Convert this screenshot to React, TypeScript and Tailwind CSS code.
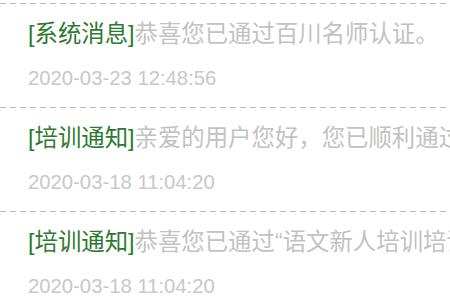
import React from "react";

const messages = [
  {
    tag: "[系统消息]",
    text: "恭喜您已通过百川名师认证。",
    time: "2020-03-23 12:48:56",
  },
  {
    tag: "[培训通知]",
    text: "亲爱的用户您好，您已顺利通过本次培训考核。",
    time: "2020-03-18 11:04:20",
  },
  {
    tag: "[培训通知]",
    text: "恭喜您已通过“语文新人培训培训班”考核。",
    time: "2020-03-18 11:04:20",
  },
];

const Divider = () => (
  <div className="h-px w-full bg-[repeating-linear-gradient(to_right,#b8b8b8_0px,#b8b8b8_6px,transparent_6px,transparent_10px)]" />
);

const App = () => {
  return (
    <div
      className="w-[450px] h-[300px] overflow-hidden bg-white pt-[3px]"
      style={{ fontFamily: '"Liberation Sans", "Noto Sans CJK SC", sans-serif' }}
    >
      {messages.map((m, i) => (
        <div key={i} className="h-[104px]">
          <Divider />
          <div className="pl-[28px] pt-[14px] text-[23.4px] leading-[32px] whitespace-nowrap overflow-hidden">
            <span className="text-[#2b7a2f]">{m.tag}</span>
            <span className="text-[#c2c2c2]">{m.text}</span>
          </div>
          <div className="pl-[28px] mt-[14px] text-[20.3px] leading-[28px] text-[#c8c8c8]">
            {m.time}
          </div>
        </div>
      ))}
    </div>
  );
};

export default App;
